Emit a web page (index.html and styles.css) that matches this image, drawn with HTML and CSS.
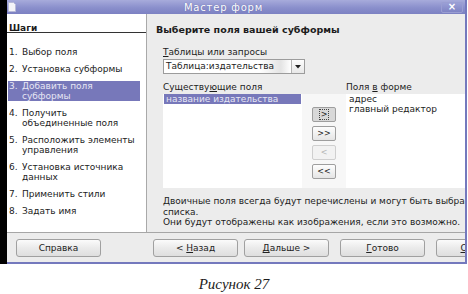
FILE: index.html
```html
<!DOCTYPE html>
<html lang="ru">
<head>
    <meta charset="UTF-8">
    <title>Мастер форм</title>
    <link rel="stylesheet" href="styles.css">
</head>
<body>
    <div class="screen">
        <div class="edge"></div>
        <div class="window">
            <div class="titlebar">
                <svg class="app-icon" width="8" height="10" viewBox="0 0 8 10">
                    <path d="M0.5 0.5h5l2 2v7h-7z" fill="#f4f4f8" stroke="#b8bad8"/>
                </svg>
                <span class="title">Мастер форм</span>
                <span class="close">&#215;</span>
            </div>

            <div class="main">
                <div class="steps">
                    <div class="steps-title">Шаги</div>
                    <ol class="step-list">
                        <li><span class="num">1.</span><span>Выбор поля</span></li>
                        <li><span class="num">2.</span><span>Установка субформы</span></li>
                        <li class="current"><span class="num">3.</span><span>Добавить поля<br>субформы</span></li>
                        <li><span class="num">4.</span><span>Получить<br>объединенные поля</span></li>
                        <li><span class="num">5.</span><span>Расположить элементы<br>управления</span></li>
                        <li><span class="num">6.</span><span>Установка источника<br>данных</span></li>
                        <li><span class="num">7.</span><span>Применить стили</span></li>
                        <li><span class="num">8.</span><span>Задать имя</span></li>
                    </ol>
                </div>

                <div class="page">
                    <h1 class="page-title">Выберите поля вашей субформы</h1>
                    <div class="content">
                        <div class="label"><u>Т</u>аблицы или запросы</div>
                        <div class="combo">
                            <div class="combo-text">Таблица:издательства</div>
                            <div class="combo-btn">
                                <svg width="6" height="4" viewBox="0 0 6 4"><path d="M0 0h6L3 3.5z" fill="#222"/></svg>
                            </div>
                        </div>

                        <div class="fields">
                            <div class="label">Существу<u>ю</u>щие поля</div>
                            <div></div>
                            <div class="label">Поля <u>в</u> форме</div>

                            <div class="listbox">
                                <div class="row selected">название издательства</div>
                            </div>
                            <div class="move-btns">
                                <button class="move pressed"><span class="focus">&gt;</span></button>
                                <button class="move">&gt;&gt;</button>
                                <button class="move" disabled>&lt;</button>
                                <button class="move">&lt;&lt;</button>
                            </div>
                            <div class="listbox">
                                <div class="row">адрес</div>
                                <div class="row">главный редактор</div>
                            </div>
                        </div>

                        <p class="note">Двоичные поля всегда будут перечислены и могут быть выбраны из<br>списка.<br>Они будут отображены как изображения, если это возможно.</p>
                    </div>
                </div>
            </div>

            <div class="footer">
                <button class="btn help">Справка</button>
                <button class="btn">&lt; <u>Н</u>азад</button>
                <button class="btn next"><u>Д</u>альше &gt;</button>
                <button class="btn finish"><u>Г</u>отово</button>
                <button class="btn cancel"><u>О</u>тмена</button>
            </div>
        </div>
    </div>
    <p class="caption">Рисунок 27</p>
</body>
</html>
```

FILE: styles.css
```css
body {
    margin: 0;
    width: 468px;
    height: 294px;
    overflow: hidden;
    background-color: #fff;
    font-family: "DejaVu Sans", sans-serif;
    font-size: 9px;
    color: #1c1c1c;
}

.screen {
    display: flex;
    height: 264px;
}

.edge {
    width: 7px;
    background-color: #000;
}

.window {
    width: 458px;
    display: flex;
    flex-direction: column;
    overflow: hidden;
    border-right: 2px solid #7479bd;
    border-bottom: 2px solid #7479bd;
    background-color: #ececec;
}

.titlebar {
    height: 14px;
    flex: none;
    display: flex;
    align-items: center;
    background: linear-gradient(#a7abdb, #8a8fcc 55%, #7c81c2);
    color: #fff;
}

.app-icon {
    margin-left: 1px;
    flex: none;
}

.title {
    flex: 1;
    text-align: center;
    font-size: 10px;
    letter-spacing: 0.8px;
    padding-right: 10px;
    text-shadow: 0 0 1px #5a5fa0;
}

.close {
    width: 20px;
    height: 9px;
    margin-right: 2px;
    border: 1px solid #9a9ed2;
    border-radius: 2px;
    background: linear-gradient(#9a9fd6, #7f84c4);
    font-size: 10px;
    line-height: 8px;
    text-align: center;
    font-weight: bold;
}

.main {
    height: 218px;
    flex: none;
    display: flex;
}

.steps {
    width: 139px;
    flex: none;
    background-color: #fff;
    border-right: 1px solid #a9a9a9;
}

.steps-title {
    margin-top: 10px;
    padding-left: 2px;
    line-height: 8px;
    font-weight: bold;
    border-bottom: 1px solid #333;
}

.step-list {
    list-style: none;
    margin: 14px 0 0;
    padding: 0;
    display: flex;
    flex-direction: column;
    gap: 7px;
}

.step-list li {
    display: flex;
    margin: 0 6px 0 1px;
    padding-left: 1px;
    line-height: 10px;
}

.step-list .num {
    width: 13px;
    flex: none;
}

.step-list li.current {
    background-color: #7778ba;
    color: #e6e6f4;
}

.page {
    flex: 1;
    min-width: 0;
    padding: 10px 0 0 9px;
    white-space: nowrap;
}

.page-title {
    margin: 0;
    font-size: 9.5px;
    line-height: 12px;
}

.content {
    padding-left: 7px;
}

.label {
    line-height: 12px;
}

.content > .label {
    margin-top: 10px;
}

.combo {
    display: flex;
    width: 140px;
    height: 13px;
    margin-top: 1px;
    border: 1px solid #9c9c9c;
    background-color: #fff;
}

.combo-text {
    flex: 1;
    padding-left: 2px;
    line-height: 13px;
    background: linear-gradient(90deg, #fff 75%, #e4e4e4 92%, #fff);
}

.combo-btn {
    width: 12px;
    border-left: 1px solid #b4b4b4;
    display: flex;
    align-items: center;
    justify-content: center;
    background: linear-gradient(#fdfdfd, #e8e8e8);
}

.fields {
    display: grid;
    grid-template-columns: 139px 44px 139px;
    grid-template-rows: 12px 94px;
    row-gap: 1px;
    margin-top: 7px;
}

.listbox {
    background-color: #fff;
}

.row {
    line-height: 10px;
    padding-left: 3px;
}

.row.selected {
    margin: 0 1px;
    padding-left: 2px;
    background-color: #7778ba;
    color: #e6e6f4;
}

.move-btns {
    display: flex;
    flex-direction: column;
    align-items: center;
    gap: 4px;
    padding-top: 13px;
    background-color: #f7f7f7;
}

.move {
    width: 24px;
    height: 15px;
    padding: 0;
    border: 1px solid #9e9e9e;
    border-radius: 2px;
    background: linear-gradient(#fdfdfd, #e5e5e5);
    font-family: "DejaVu Sans", sans-serif;
    font-size: 8px;
    color: #222;
    line-height: 12px;
}

.move.pressed {
    background: #d8d8d8;
}

.move .focus {
    padding: 0 1px;
    border: 1px dotted #444;
}

.move:disabled {
    border-color: #cfcfcf;
    background: #f2f2f2;
    color: #b5b5b5;
}

.note {
    margin: 8px 0 0;
    line-height: 10.5px;
}

.footer {
    flex: 1;
    display: flex;
    align-items: flex-start;
    padding: 6px 0 0 9px;
    border-top: 1px solid #a6a6a6;
}

.btn {
    flex: none;
    width: 85px;
    height: 18px;
    padding: 0;
    border: 1px solid #a0a0a0;
    border-radius: 3px;
    background: linear-gradient(#fbfbfb, #eaeaea 50%, #dedede);
    font-family: "DejaVu Sans", sans-serif;
    font-size: 9px;
    color: #222;
}

.btn.help {
    margin-right: 52px;
}

.btn.next {
    margin-left: 6px;
}

.btn.finish {
    margin-left: 11px;
}

.btn.cancel {
    margin-left: 11px;
}

.caption {
    margin: 12px 0 0;
    text-align: center;
    font-family: "Liberation Serif", serif;
    font-style: italic;
    font-size: 15px;
}
```
